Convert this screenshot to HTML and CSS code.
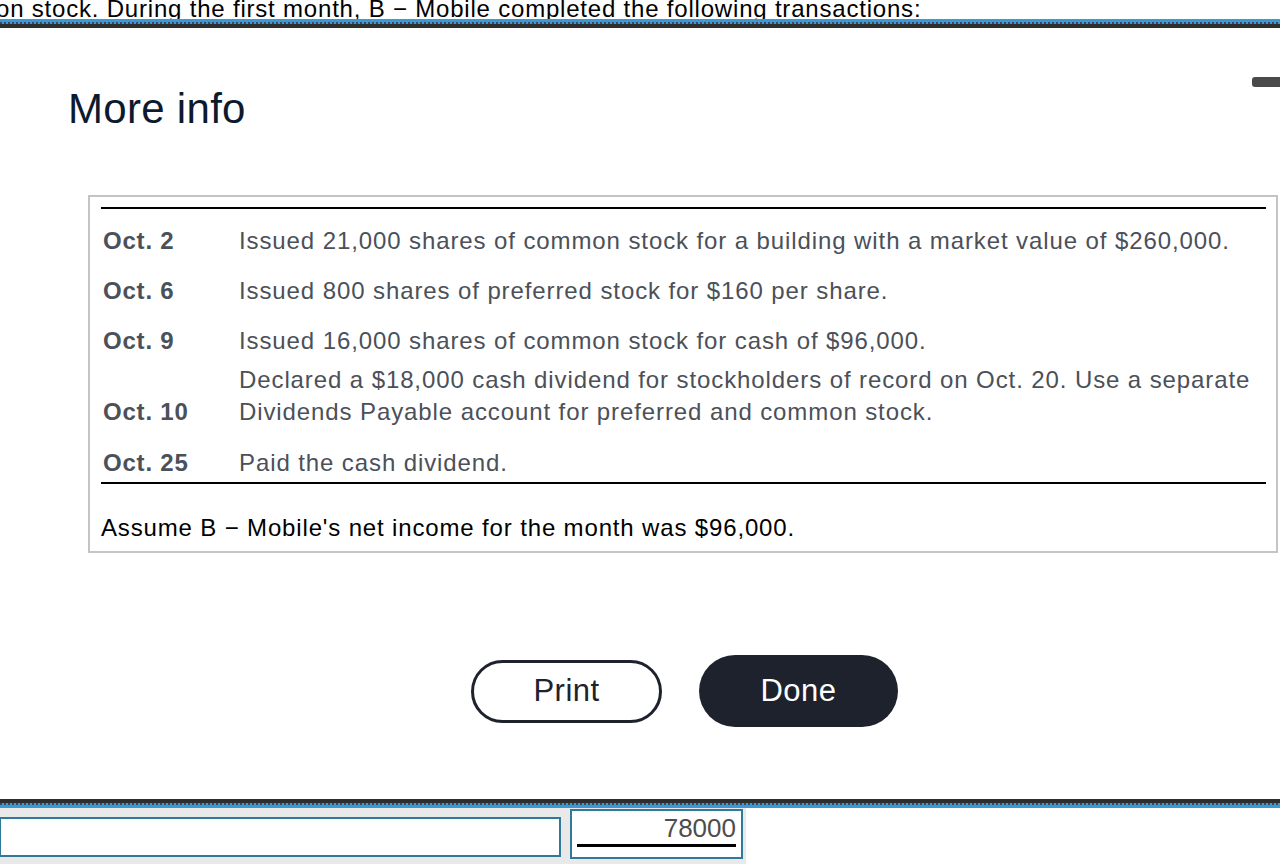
FILE: index.html
```html
<!DOCTYPE html>
<html>
<head>
<meta charset="utf-8">
<link rel="stylesheet" href="styles.css">
</head>
<body>
<div class="page">
  <div class="intro"><span class="intro-text">on stock. During the first month, B − Mobile completed the following transactions:</span></div>
  <div class="band-top">
    <div class="band-blue"></div>
    <div class="band-dash"></div>
    <div class="band-dark"></div>
  </div>

  <main class="modal">
    <div class="modal-head">
      <h1 class="title">More info</h1>
      <span class="close-bar"></span>
    </div>

    <section class="info-box">
      <div class="rule"></div>
      <div class="rows">
        <div class="row"><div class="date">Oct. 2</div><div class="desc">Issued 21,000 shares of common stock for a building with a market value of $260,000.</div></div>
        <div class="row"><div class="date">Oct. 6</div><div class="desc">Issued 800 shares of preferred stock for $160 per share.</div></div>
        <div class="row"><div class="date">Oct. 9</div><div class="desc">Issued 16,000 shares of common stock for cash of $96,000.</div></div>
        <div class="row row-two"><div class="date">Oct. 10</div><div class="desc">Declared a $18,000 cash dividend for stockholders of record on Oct. 20. Use a separate<br>Dividends Payable account for preferred and common stock.</div></div>
        <div class="row row-last"><div class="date">Oct. 25</div><div class="desc">Paid the cash dividend.</div></div>
      </div>
      <div class="rule"></div>
      <p class="assume">Assume B − Mobile's net income for the month was $96,000.</p>
    </section>

    <div class="actions">
      <button class="btn btn-outline">Print</button>
      <button class="btn btn-solid">Done</button>
    </div>
  </main>

  <div class="band-bottom">
    <div class="band-dark"></div>
    <div class="band-dash"></div>
    <div class="band-blue"></div>
  </div>
  <div class="footer">
    <div class="footer-gray">
      <div class="field field-wide"></div>
      <div class="field field-num"><span class="num">78000</span></div>
    </div>
  </div>
</div>
</body>
</html>
```

FILE: styles.css
```css
* { box-sizing: border-box; }
html, body { margin: 0; padding: 0; }
body {
  font-family: "Liberation Sans", Arial, sans-serif;
  background: #ffffff;
  width: 1280px;
  height: 864px;
  overflow: hidden;
}
.page { width: 1280px; height: 864px; display: flex; flex-direction: column; }

.intro {
  height: 19px;
  overflow: hidden;
  white-space: nowrap;
}
.intro-text {
  display: block;
  font-size: 24px;
  line-height: 24px;
  letter-spacing: 0.8px;
  margin-top: -3px;
  margin-left: -4px;
  color: #000;
}

.band-blue { height: 3px; background: #3d99d6; }
.band-dash {
  height: 2px;
  background: repeating-linear-gradient(90deg, #3a4a58 0 2px, #3d99d6 2px 4px);
}
.band-dark { height: 5px; background: #2e2e2e; }
.band-top .band-dark { height: 4px; }

.modal { flex: 1; display: flex; flex-direction: column; }
.modal-head {
  display: flex;
  justify-content: space-between;
  align-items: flex-start;
  margin-top: 60px;
}
.title {
  margin: 0 0 0 68px;
  font-size: 42px;
  line-height: 42px;
  letter-spacing: 0.3px;
  font-weight: 400;
  color: #0c1a30;
}
.close-bar {
  width: 28px;
  height: 10px;
  margin-top: -11px;
  background: #4a4a4a;
  border-radius: 3px 0 0 3px;
}

.info-box {
  margin: 65px 2px 0 88px;
  border: 2px solid #c4c4c4;
  padding: 10px 10px 0 11px;
}
.rule { height: 2px; background: #000; }
.rows { padding-top: 6px; }
.row {
  display: flex;
  align-items: flex-end;
  padding: 8.5px 0;
  line-height: 33px;
  font-size: 24px;
  letter-spacing: 0.9px;
  color: #4b5059;
  white-space: nowrap;
}
.row-two { margin-top: -1px; padding: 0 0 9px; line-height: 32px; }
.row-last { padding: 8.5px 0 3.5px; }
.date {
  width: 138px;
  flex: none;
  padding-left: 2px;
  font-weight: 700;
  letter-spacing: 0.8px;
  color: #4b5059;
}
.desc { flex: 1; }
.assume {
  margin: 0;
  padding: 27px 0 7px;
  font-size: 24px;
  line-height: 33px;
  letter-spacing: 0.85px;
  color: #000;
  white-space: nowrap;
}

.actions {
  display: flex;
  justify-content: center;
  align-items: center;
  gap: 37px;
  margin-top: 102px;
  padding-left: 89px;
}
.btn {
  font-family: "Liberation Sans", Arial, sans-serif;
  font-size: 31px;
  letter-spacing: 0.5px;
  border-radius: 40px;
  cursor: pointer;
  padding: 0;
}
.btn-outline {
  width: 191px;
  height: 63px;
  background: #fff;
  color: #1e222d;
  border: 3px solid #1e222d;
}
.btn-solid {
  width: 199px;
  height: 72px;
  background: #1e222d;
  color: #fff;
  border: none;
}

.band-bottom .band-dark { height: 4px; }
.footer { height: 56px; display: flex; }
.footer-gray {
  width: 746px;
  height: 56px;
  background: #e9e9e9;
  display: flex;
  align-items: flex-start;
}
.field {
  background: #fff;
  border: 2px solid #2f7a9c;
}
.field-wide {
  width: 562px;
  height: 40px;
  margin: 9px 0 0 -1px;
}
.field-num {
  width: 173px;
  height: 50px;
  margin: 1px 0 0 9px;
  padding: 3px 5px 0;
  text-align: right;
}
.num {
  display: block;
  font-size: 26px;
  line-height: 28px;
  color: #4d4d4d;
  border-bottom: 3px solid #000;
  padding-bottom: 2px;
}
```
